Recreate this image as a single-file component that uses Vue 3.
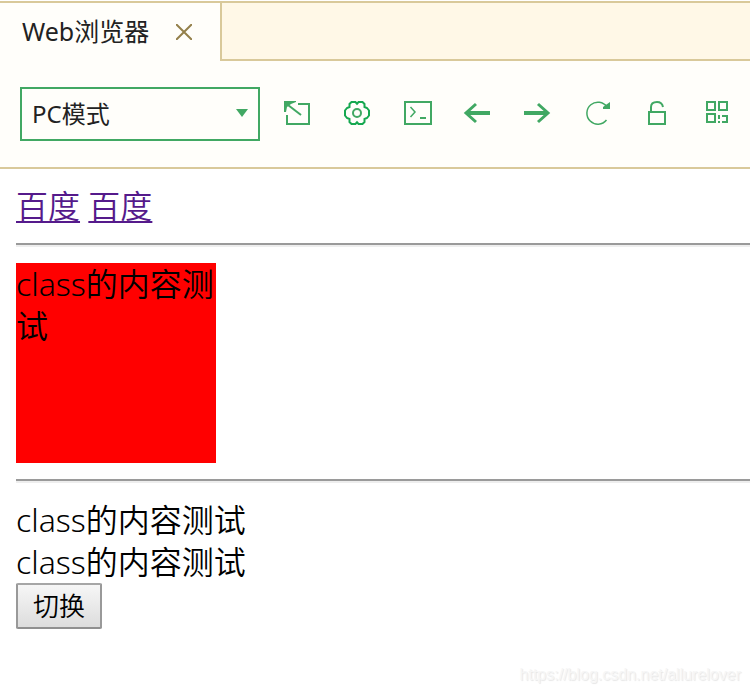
<template>
  <div class="browser">
    <header class="tabs">
      <div class="tab">
        <span>Web浏览器</span>
        <button class="close" type="button" aria-label="关闭">
          <svg width="16" height="16" viewBox="0 0 16 16">
            <path d="M0 0L16 16M16 0L0 16" />
          </svg>
        </button>
      </div>
      <div class="tab-rest"></div>
    </header>

    <nav class="toolbar">
      <div class="mode">
        <select v-model="mode" aria-label="浏览模式">
          <option value="pc">PC模式</option>
        </select>
        <svg class="caret" width="12" height="8" viewBox="0 0 12 8">
          <path d="M0 0H12L6 8Z" />
        </svg>
      </div>
      <div class="tools">
        <button v-for="tool in tools" :key="tool.name" type="button" :aria-label="tool.name">
          <svg width="28" height="28" viewBox="0 0 28 28">
            <path
              v-for="(p, i) in tool.paths"
              :key="i"
              :d="p.d"
              :class="p.type"
            />
          </svg>
        </button>
      </div>
    </nav>

    <main class="page">
      <div>
        <a href="#">百度</a>&nbsp;<a href="#">百度</a>
      </div>
      <hr>
      <div :class="{ box: active }">class的内容测试</div>
      <hr>
      <div :class="{ box: !active }">class的内容测试</div>
      <div :class="{ box: !active }">class的内容测试</div>
      <button class="toggle" type="button" @click="active = !active">切换</button>
    </main>

    <footer class="watermark">https://blog.csdn.net/allurelover</footer>
  </div>
</template>

<script setup>
import { ref } from 'vue'

const mode = ref('pc')
// 是否应用红色样式
const active = ref(true)

// 工具栏图标
const tools = [
  {
    name: '新窗口',
    paths: [
      { d: 'M15 5H26V25H4V16' },
      { d: 'M5 6L18 16' },
      { d: 'M1 2H13V3L8 5L4 8L3 13H1Z', type: 'solid' }
    ]
  },
  {
    name: '设置',
    paths: [
      { d: 'M14 4.8L15.5 3H19.5L21.5 5V8L24 9L26 11.5V16.5L24 19L21.5 20V23L19.5 25H15.5L14 23.2L12.5 25H8.5L6.5 23V20L4 19L2 16.5V11.5L4 9L6.5 8V5L8.5 3H12.5Z', type: 'bright' },
      { d: 'M18 14A4 4 0 1 1 10 14A4 4 0 1 1 18 14Z' }
    ]
  },
  {
    name: '控制台',
    paths: [
      { d: 'M2 3H28V25H2Z' },
      { d: 'M7.5 8L12 13L7.5 18', type: 'thin' },
      { d: 'M17 19H23' }
    ]
  },
  {
    name: '后退',
    paths: [
      { d: 'M3 14H27', type: 'thick' },
      { d: 'M13 5L3 14L13 23', type: 'head' }
    ]
  },
  {
    name: '前进',
    paths: [
      { d: 'M1 14H25', type: 'thick' },
      { d: 'M15 5L25 14L15 23', type: 'head' }
    ]
  },
  {
    name: '刷新',
    paths: [
      { d: 'M24 8A11 11 0 1 0 23.5 21', type: 'thin' },
      { d: 'M27 3V10H20V8Z', type: 'solid' }
    ]
  },
  {
    name: '解锁',
    paths: [
      { d: 'M6 13H22V25H6Z' },
      { d: 'M8 12V8Q8 3 14 3Q19 3 20 8' }
    ]
  },
  {
    name: '二维码',
    paths: [
      { d: 'M4 3H12V11H4ZM16 3H24V11H16ZM4 15H12V23H4Z' },
      { d: 'M16 16V20M16 22V24M19 17H24V23H19' }
    ]
  }
]
</script>

<style>
body {
  background: #fff;
}
</style>

<style scoped>
.browser {
  font-family: 'Noto Sans', 'Noto Sans CJK SC', sans-serif;
  color: #000;
  overflow: hidden;
}

button {
  font: inherit;
}

.tabs {
  display: flex;
  height: 60px;
  margin-top: 1px;
  background: #fffefa;
  border-top: 2px solid #d9c99a;
  box-sizing: border-box;
}

.tab {
  display: flex;
  align-items: center;
  gap: 27px;
  width: 220px;
  padding-left: 22px;
  box-sizing: border-box;
  font-size: 25px;
  line-height: 56px;
  color: #222;
}

.tab span {
  align-self: flex-start;
}

.close {
  display: flex;
  padding: 0;
  border: 0;
  background: none;
}

.close path {
  fill: none;
  stroke: #94804a;
  stroke-width: 2;
}

.tab-rest {
  flex: 1;
  background: #fff8e7;
  border-left: 2px solid #d9c99a;
  border-bottom: 2px solid #d9c99a;
}

.toolbar {
  display: flex;
  align-items: center;
  gap: 23px;
  padding: 26px 0 26px 20px;
  background: #fffefa;
  border-bottom: 2px solid #d9c99a;
}

.mode {
  position: relative;
  flex: none;
  width: 240px;
}

.mode select {
  display: block;
  width: 100%;
  height: 54px;
  padding: 0 10px 2px;
  appearance: none;
  border: 2px solid #41a863;
  border-radius: 0;
  background: #fffefa;
  font-family: inherit;
  font-size: 24px;
  color: #222;
}

.caret {
  position: absolute;
  top: 22px;
  right: 12px;
  fill: #41a863;
  pointer-events: none;
}

.tools {
  display: flex;
  gap: 32px;
  padding-bottom: 2px;
}

.tools button {
  display: flex;
  padding: 0;
  border: 0;
  background: none;
}

.tools svg {
  overflow: visible;
}

.tools path {
  fill: none;
  stroke: #41a863;
  stroke-width: 2;
}

.tools .bright {
  stroke: #16a850;
}

.tools .thin {
  stroke-width: 1.5;
}

.tools .head {
  stroke-width: 3;
}

.tools .thick {
  stroke-width: 4;
}

.tools .solid {
  fill: #41a863;
  stroke: none;
}

.page {
  padding: 16px 0 0 16px;
  font-size: 32px;
  font-weight: 350;
  line-height: 42px;
}

.page a {
  color: #551a8b;
  text-decoration-thickness: 2px;
  text-underline-offset: 3px;
}

.page hr {
  margin: 16px 0;
  border: 2px solid;
  border-color: #9a9a9a #eee #eee #9a9a9a;
  border-right: 0;
  border-left: 0;
}

.box {
  width: 200px;
  height: 200px;
  background: #f00;
}

.toggle {
  display: block;
  height: 46px;
  padding: 0 15px;
  border: 2px solid #999;
  border-color: #a6a6a6 #999 #909090;
  border-radius: 2px;
  background: linear-gradient(#f6f6f6, #ddd);
  font-size: 26px;
  line-height: 42px;
  color: #000;
}

.watermark {
  padding: 36px 9px 8px 0;
  font-family: 'Liberation Sans', Arial, sans-serif;
  font-size: 16px;
  line-height: 20px;
  text-align: right;
  color: #f6f6f6;
  text-shadow: 1px 1px 1px #e6e6e6;
}
</style>
